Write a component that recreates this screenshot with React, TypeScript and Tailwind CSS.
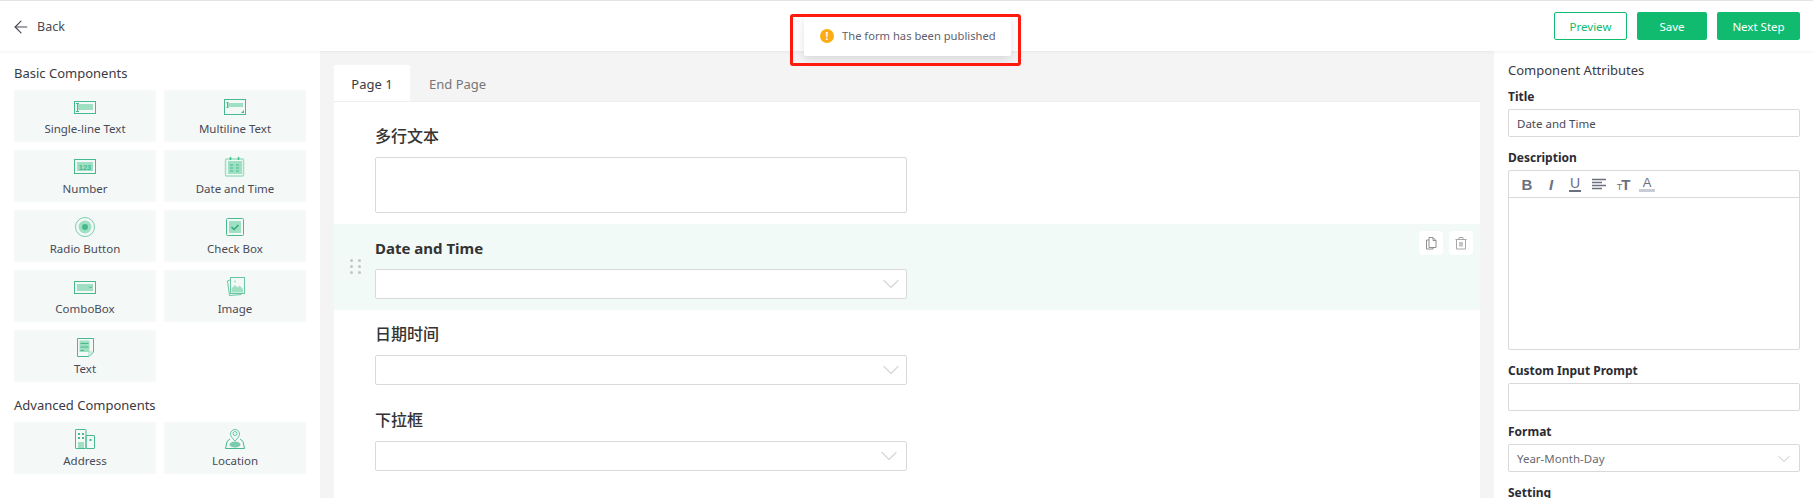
import React from 'react';
import { ArrowLeft, ChevronDown } from 'lucide-react';

const STROKE = '#46b98f';
const FILL = '#9fdfc2';

const SingleLineIcon = () => (
  <svg width="26" height="26" viewBox="0 0 26 26" fill="none">
    <rect x="2.5" y="6.5" width="21" height="12" stroke={STROKE} />
    <rect x="6" y="9" width="15" height="6" fill={FILL} />
    <path d="M4 8.5h3M5.5 8.5v8M4 16.5h3" stroke={STROKE} />
  </svg>
);

const MultiLineIcon = () => (
  <svg width="26" height="26" viewBox="0 0 26 26" fill="none">
    <rect x="2.5" y="4.5" width="21" height="15" stroke={STROKE} />
    <rect x="6" y="8" width="15" height="4" fill={FILL} />
    <path d="M4.5 7.5h2M5.5 7.5v5M4.5 12.5h2" stroke={STROKE} />
    <path d="M22 15v3h-3z" fill={STROKE} />
  </svg>
);

const NumberIcon = () => (
  <svg width="26" height="26" viewBox="0 0 26 26" fill="none">
    <rect x="2.5" y="4.5" width="21" height="14" stroke={STROKE} />
    <rect x="5" y="7" width="16" height="9" fill={FILL} />
    <text x="13" y="14.5" textAnchor="middle" fontSize="7.5" fontWeight="700" fontFamily="Liberation Sans, sans-serif" fill="#46b98f">
      123
    </text>
  </svg>
);

const DateIcon = () => (
  <svg width="26" height="26" viewBox="0 0 26 26" fill="none">
    <rect x="3.5" y="4" width="18" height="17" rx="1" stroke="#9fdfc2" strokeWidth="1.5" />
    <rect x="6" y="6" width="14" height="13" fill={FILL} />
    <path d="M8.5 2v3M16.5 2v3" stroke={STROKE} strokeWidth="1.5" />
    <path d="M8 10h3M14 10h3M8 13h3M14 13h3M8 16h3M14 16h3" stroke={STROKE} />
  </svg>
);

const RadioIcon = () => (
  <svg width="26" height="26" viewBox="0 0 26 26" fill="none">
    <circle cx="13" cy="12" r="9.5" stroke={STROKE} strokeOpacity="0.7" />
    <circle cx="13" cy="12" r="6.5" fill={FILL} />
    <circle cx="13" cy="12" r="3" fill={STROKE} />
  </svg>
);

const CheckIcon = () => (
  <svg width="26" height="26" viewBox="0 0 26 26" fill="none">
    <rect x="4.5" y="3.5" width="17" height="17" rx="1" stroke={STROKE} />
    <rect x="7" y="6" width="12" height="12" fill={FILL} />
    <path d="M9.5 12l2.5 2.5 4.5-4.5" stroke="#2fa97c" strokeWidth="1.5" />
  </svg>
);

const ComboIcon = () => (
  <svg width="26" height="26" viewBox="0 0 26 26" fill="none">
    <rect x="2.5" y="6.5" width="21" height="12" stroke={STROKE} />
    <rect x="5" y="9" width="16" height="7" fill={FILL} />
    <path d="M17 11.5l1.5 1.5 1.5-1.5" stroke={STROKE} />
  </svg>
);

const ImageIcon = () => (
  <svg width="26" height="26" viewBox="0 0 26 26" fill="none">
    <path d="M8 5l-2.5 1 2 14.5 12-1" stroke={STROKE} strokeOpacity="0.8" />
    <rect x="8.5" y="2.5" width="14" height="16" stroke={STROKE} strokeOpacity="0.8" />
    <path d="M9.5 17.5v-4l3.5-3.5 2.5 2.5 2-2 3.5 3.5v3.500z" fill={FILL} />
    <circle cx="13" cy="6.5" r="1" fill={FILL} />
  </svg>
);

const TextIcon = () => (
  <svg width="26" height="26" viewBox="0 0 26 26" fill="none">
    <path d="M5.5 3.5h16v13.500l-4.500 4.500h-11.500z" stroke={STROKE} />
    <path d="M17 21.5v-4.500h4.500" stroke={FILL} />
    <rect x="7.5" y="5.5" width="10" height="11.5" fill={FILL} />
    <path d="M8.5 8.500h8M8.500 12h8M8.500 15.500h3.500" stroke={STROKE} />
  </svg>
);

const AddressIcon = () => (
  <svg width="26" height="26" viewBox="0 0 26 26" fill="none">
    <rect x="3.5" y="2.5" width="10.5" height="19" rx="0.5" stroke={STROKE} />
    <rect x="14" y="8.5" width="8.5" height="13" rx="0.5" stroke={STROKE} />
    <rect x="6" y="15" width="6" height="6" fill={FILL} />
    <path d="M6 6h2v2H6zM10 6h2v2h-2zM6 10h2v2H6zM10 10h2v2h-2zM17.500 12h2v2h-2z" fill={STROKE} />
  </svg>
);

const LocationIcon = () => (
  <svg width="26" height="26" viewBox="0 0 26 26" fill="none">
    <path d="M13 14c-3-3-4.500-5-4.500-7a4.500 4.500 0 0 1 9 0c0 2-1.500 4-4.500 7z" stroke={STROKE} strokeOpacity="0.8" />
    <circle cx="13" cy="6.5" r="2" stroke={STROKE} strokeOpacity="0.8" />
    <path d="M8 12l-3 2.500-1.500 7h19l-1.500-7-3-2.500" stroke={STROKE} />
    <ellipse cx="13" cy="17.5" rx="5.5" ry="3" fill={STROKE} fillOpacity="0.7" />
  </svg>
);

const basicComponents = [
  { label: 'Single-line Text', icon: <SingleLineIcon /> },
  { label: 'Multiline Text', icon: <MultiLineIcon /> },
  { label: 'Number', icon: <NumberIcon /> },
  { label: 'Date and Time', icon: <DateIcon /> },
  { label: 'Radio Button', icon: <RadioIcon /> },
  { label: 'Check Box', icon: <CheckIcon /> },
  { label: 'ComboBox', icon: <ComboIcon /> },
  { label: 'Image', icon: <ImageIcon /> },
  { label: 'Text', icon: <TextIcon /> },
];

const advancedComponents = [
  { label: 'Address', icon: <AddressIcon /> },
  { label: 'Location', icon: <LocationIcon /> },
];

const ComponentGrid = ({ items }: { items: { label: string; icon: React.ReactNode }[] }) => (
  <div className="grid grid-cols-[142px_142px] gap-x-2 gap-y-2">
    {items.map((item) => (
      <div key={item.label} className="h-[52px] rounded-[2px] bg-[#f4f8f7] pt-[5px] flex flex-col items-center text-[11.5px] leading-4 text-[#4a4a55]">
        {item.icon}
        <span>{item.label}</span>
      </div>
    ))}
  </div>
);

const SelectBox = ({ inset = false }: { inset?: boolean }) => (
  <div className={`w-[532px] h-[30px] bg-white border border-[#d9d9d9] rounded-[2px] flex items-center justify-end ${inset ? 'pr-[3px]' : 'pr-[1px]'}`}>
    <ChevronDown size={28} strokeWidth={1.2} className="text-[#d9d9d9]" />
  </div>
);

const FormRow = ({ label, children }: { label: string; children: React.ReactNode }) => (
  <div className="h-[86px] pl-[41px]">
    <div className="h-[45px] pt-[10px] text-base leading-[28px] font-medium text-[#333]">{label}</div>
    {children}
  </div>
);

const AttrLabel = ({ children }: { children: React.ReactNode }) => (
  <div className="h-4 pt-px text-xs leading-4 font-bold text-[#2b2b33]">{children}</div>
);

const inputClass = 'h-7 border border-[#d9d9d9] rounded-[2px] px-[8px] pt-px flex items-center text-[11.5px] text-[#4a4a55]';

export default function App() {
  return (
    <div className="h-[498px] w-[1813px] overflow-hidden relative bg-white border-t border-[#e3e3e3] font-['Noto_Sans','Noto_Sans_CJK_SC',sans-serif]">
      <header className="relative z-10 h-[50px] bg-white shadow-[0_1px_3px_rgba(0,0,0,0.05)] flex items-center justify-between pl-[11px] pr-[13px]">
        <div className="flex items-center gap-[6px] pt-[2px] text-[12.5px] text-[#4a4a55]">
          <ArrowLeft size={20} strokeWidth={1.4} />
          <span>Back</span>
        </div>
        <div className="flex gap-[10px] text-[11.5px]">
          <button className="w-[73px] h-7 pt-px border border-[#10bb6f] rounded-[2px] text-[#10bb6f]">Preview</button>
          <button className="w-[70px] h-7 pt-px bg-[#10bb6f] rounded-[2px] text-white">Save</button>
          <button className="w-[83px] h-7 pt-px bg-[#10bb6f] rounded-[2px] text-white">Next Step</button>
        </div>
      </header>

      <div className="flex h-[447px] bg-[#f4f4f4]">
        <aside className="w-[320px] bg-white pl-[14px] pt-[12px]">
          <div className="text-[13px] leading-5 text-[#3a3a44] mb-[7px]">Basic Components</div>
          <ComponentGrid items={basicComponents} />
          <div className="text-[13px] leading-5 text-[#3a3a44] mt-[13px] mb-[7px]">Advanced Components</div>
          <ComponentGrid items={advancedComponents} />
        </aside>

        <main className="w-[1146px] ml-[14px] pt-[14px]">
          <div className="flex h-[36px] text-[13px] leading-[38px]">
            <div className="w-[76px] bg-white text-center text-[#3a3a44]">Page 1</div>
            <div className="pl-[19px] text-[#777]">End Page</div>
          </div>
          <div className="bg-white h-[397px] pt-[10px] border-t border-[#eee] overflow-hidden">
            <div className="h-[112px] pl-[41px]">
              <div className="h-[45px] pt-[10px] text-base leading-[28px] font-medium text-[#333]">多行文本</div>
              <div className="w-[532px] h-[56px] bg-white border border-[#d9d9d9] rounded-[2px]"></div>
            </div>
            <div className="relative h-[86px] pl-[41px] bg-[#f2faf7]">
              <div className="h-[45px] pt-[10px] text-[15px] leading-[28px] font-bold text-[#333]">Date and Time</div>
              <SelectBox />
              <div className="absolute left-[16px] top-[35px] grid grid-cols-2 gap-x-[5px] gap-y-[3px]">
                {[0, 1, 2, 3, 4, 5].map((dot) => (
                  <span key={dot} className="w-[3px] h-[3px] rounded-full bg-[#c4c4c4]"></span>
                ))}
              </div>
              <div className="absolute right-[7px] top-[7px] flex gap-[6px]">
                <div className="w-6 h-6 rounded-[4px] bg-white flex items-center justify-center">
                  <svg width="16" height="16" viewBox="0 0 16 16" fill="none" stroke="#8f8f8f">
                    <path d="M6 2.5h4l3 3v7H6z" />
                    <path d="M10 2.5v3h3" />
                    <path d="M6 5H3.5v9H10v-1.500" />
                  </svg>
                </div>
                <div className="w-6 h-6 rounded-[4px] bg-white flex items-center justify-center">
                  <svg width="16" height="16" viewBox="0 0 16 16" fill="none" stroke="#a8a8a8">
                    <path d="M2.5 4.5h11M6 4.5v-2h4v2M3.5 4.5v9.500h9V4.500" />
                    <rect x="6" y="7" width="4" height="4.5" fill="#c4c4c4" stroke="none" />
                  </svg>
                </div>
              </div>
            </div>
            <FormRow label="日期时间">
              <SelectBox />
            </FormRow>
            <FormRow label="下拉框">
              <SelectBox inset />
            </FormRow>
            <FormRow label="单选框">
              <SelectBox />
            </FormRow>
          </div>
        </main>

        <aside className="w-[319px] ml-[14px] bg-white pl-[14px] pr-[13px] pt-[9px]">
          <div className="text-[13px] leading-5 text-[#3a3a44] mb-[8px]">Component Attributes</div>
          <AttrLabel>Title</AttrLabel>
          <div className={`${inputClass} mt-[5px] mb-[12px]`}>Date and Time</div>
          <AttrLabel>Description</AttrLabel>
          <div className="mt-[5px] h-[180px] border border-[#d9d9d9] rounded-[2px]">
            <div className="h-[27px] border-b border-[#d9d9d9] flex items-center pl-[10px] gap-[8px] text-[#6b7080] font-['Liberation_Sans',sans-serif] font-bold leading-none">
              <span className="w-4 text-center text-[15px]">B</span>
              <span className="w-4 text-center text-[15px] italic">I</span>
              <span className="w-4 flex justify-center">
                <span className="w-[12px] text-center text-sm font-normal leading-[13px] border-b-2 border-[#6b7080]">U</span>
              </span>
              <svg width="16" height="16" viewBox="0 0 16 16" stroke="#6b7080" strokeWidth="1.3">
                <path d="M1 3.5h14M1 6.5h10M1 9.5h14M1 12.5h10" />
              </svg>
              <span className="w-4 text-center text-[15px] tracking-[-1px]">
                <span className="text-[9px] font-normal">T</span>T
              </span>
              <span className="w-4 text-center text-[13px] font-normal leading-[13px] border-b-[3px] border-[#c8ccd4]">A</span>
            </div>
          </div>
          <div className="mt-[12px]">
            <AttrLabel>Custom Input Prompt</AttrLabel>
            <div className={`${inputClass} mt-[5px] mb-[12px]`}></div>
            <AttrLabel>Format</AttrLabel>
            <div className={`${inputClass} mt-[5px] mb-[12px] justify-between !pr-[5px]`}>
              <span className="text-[#6a6a74]">Year-Month-Day</span>
              <ChevronDown size={20} strokeWidth={1} className="text-[#b5b5b5]" />
            </div>
            <AttrLabel>Setting</AttrLabel>
          </div>
        </aside>
      </div>

      {/* published toast and the red annotation box round it */}
      <div className="absolute left-[804px] top-[15px] z-20 w-[207px] h-[40px] rounded-[2px] bg-white shadow-[0_3px_10px_rgba(0,0,0,0.12)] flex items-center pl-[16px] gap-[8px] text-[11.2px] text-[#5f5f6b]">
        <span className="w-[14px] h-[14px] rounded-full bg-[#faad14] text-white text-[10px] font-bold leading-[14px] text-center">!</span>
        <span>The form has been published</span>
      </div>
      <div className="absolute left-[790px] top-[13px] z-30 w-[231px] h-[52px] border-[3px] border-[#ff1a10] rounded-[3px]"></div>
    </div>
  );
}
